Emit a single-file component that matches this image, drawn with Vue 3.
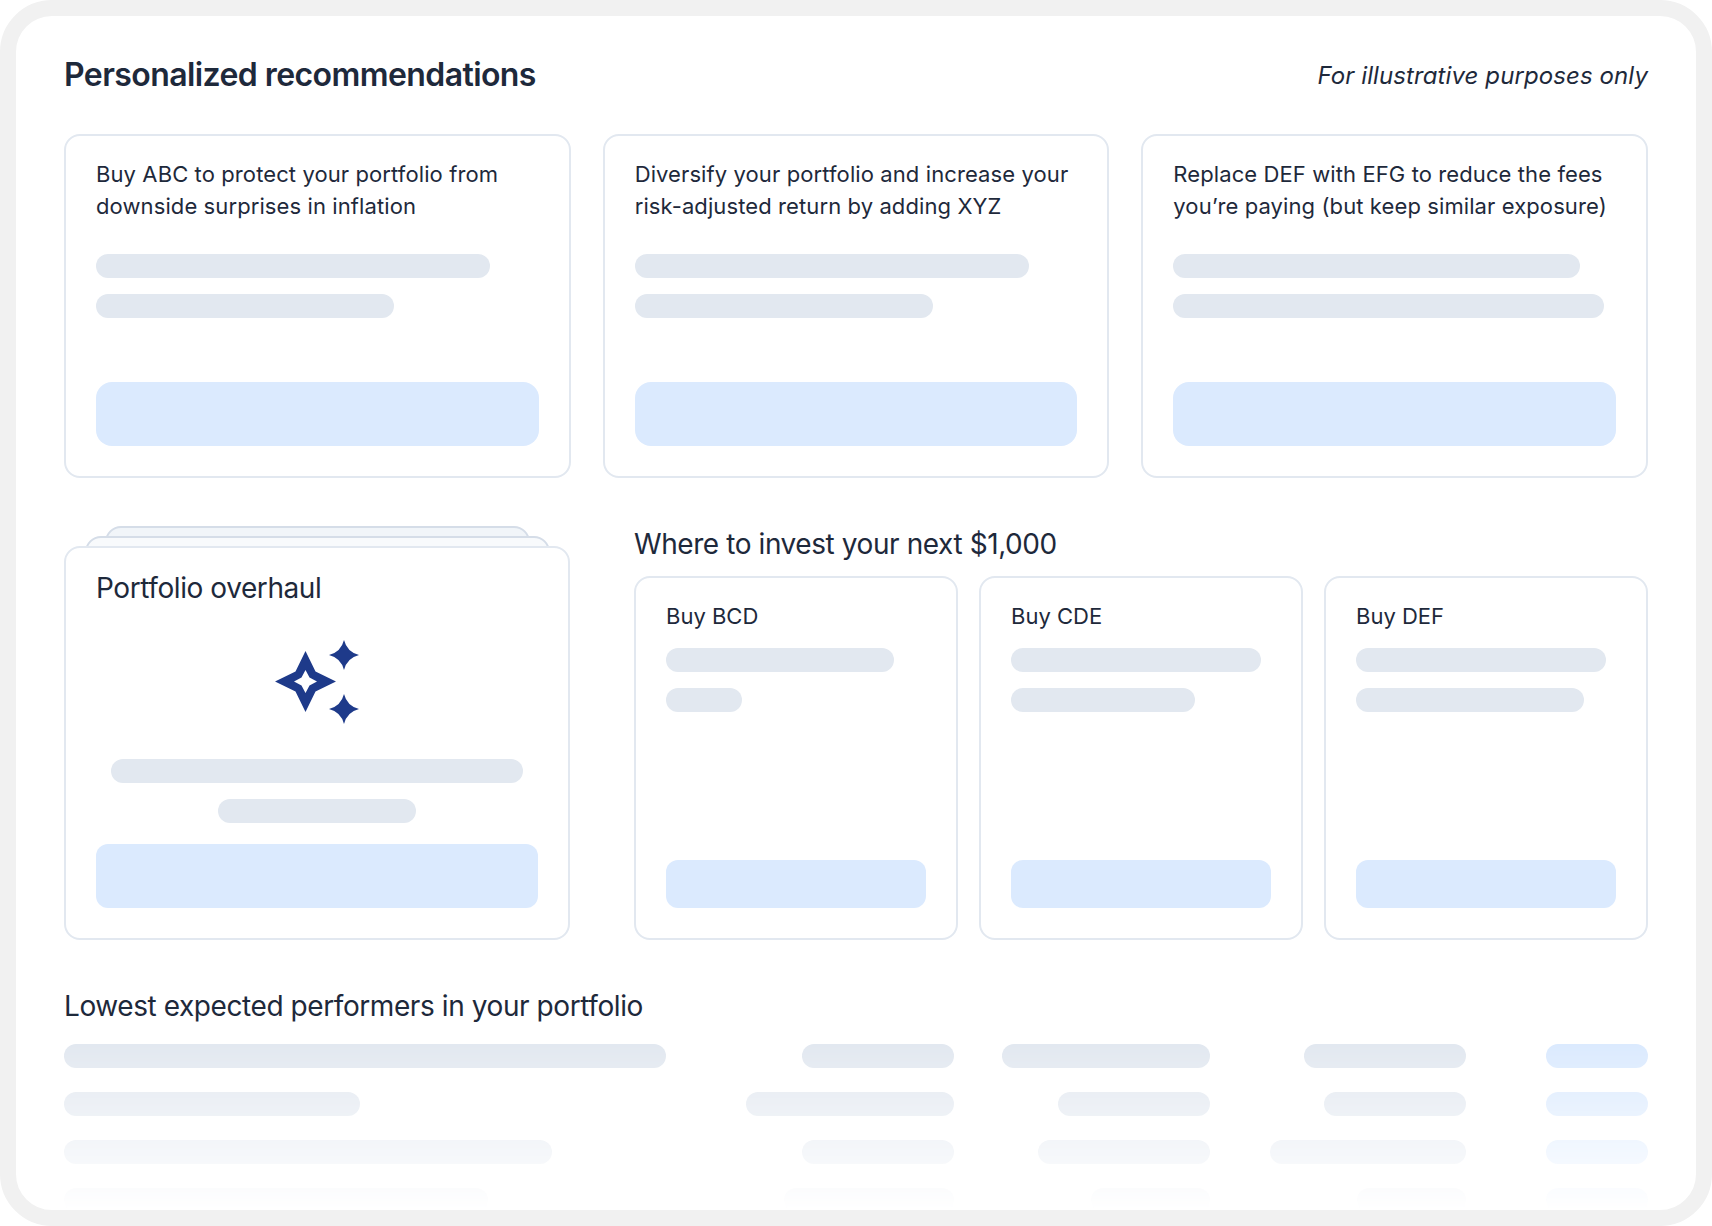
<template>
  <div class="frame">
    <div class="panel">
      <header class="top">
        <h1 class="title">Personalized recommendations</h1>
        <p class="note">For illustrative purposes only</p>
      </header>

      <section class="recs">
        <article v-for="r in recs" :key="r.text" class="card rec">
          <p class="rec-text">{{ r.line1 }}<br />{{ r.line2 }}</p>
          <div class="bars">
            <div v-for="w in r.bars" :key="w" class="bar" :style="{ width: w + 'px' }"></div>
          </div>
          <div class="btn rec-btn"></div>
        </article>
      </section>

      <section class="middle">
        <div class="stack">
          <div class="sheet sheet-back"></div>
          <div class="sheet sheet-mid"></div>
          <article class="card overhaul">
            <h2 class="heading">Portfolio overhaul</h2>
            <svg class="sparkles" width="84" height="84" viewBox="0 0 84 84" aria-hidden="true">
              <path
                fill-rule="evenodd"
                d="M30.5 11 40.5 31.5 61 41.5 40.5 51.5 30.5 72 20.5 51.5 0 41.5 20.5 31.5ZM30.5 30 26.5 37.5 19 41.5 26.5 45.5 30.5 53 34.5 45.5 42 41.5 34.5 37.5Z"
              />
              <path d="M69 0Q72 12 84 15 72 18 69 30 66 18 54 15 66 12 69 0Z" />
              <path d="M69 54Q72 66 84 69 72 72 69 84 66 72 54 69 66 66 69 54Z" />
            </svg>
            <div class="bars centered">
              <div class="bar" style="width: 412px"></div>
              <div class="bar" style="width: 198px"></div>
            </div>
            <div class="btn overhaul-btn"></div>
          </article>
        </div>

        <div class="invest">
          <h2 class="heading invest-heading">Where to invest your next $1,000</h2>
          <div class="buys">
            <article v-for="b in buys" :key="b.name" class="card buy">
              <p class="buy-name">{{ b.name }}</p>
              <div class="bars">
                <div v-for="w in b.bars" :key="w" class="bar" :style="{ width: w + 'px' }"></div>
              </div>
              <div class="btn buy-btn"></div>
            </article>
          </div>
        </div>
      </section>

      <section class="lowest">
        <h2 class="heading lowest-heading">Lowest expected performers in your portfolio</h2>
        <div class="table">
          <div v-for="(row, i) in rows" :key="i" class="row">
            <div class="bar" :style="{ width: row[0] + 'px' }"></div>
            <div class="bar end" :style="{ width: row[1] + 'px' }"></div>
            <div class="bar end" :style="{ width: row[2] + 'px' }"></div>
            <div class="bar end" :style="{ width: row[3] + 'px' }"></div>
            <div class="bar end action"></div>
          </div>
        </div>
      </section>
    </div>
  </div>
</template>

<script setup>
const recs = [
  {
    text: 'abc',
    line1: 'Buy ABC to protect your portfolio from',
    line2: 'downside surprises in inflation',
    bars: [394, 298],
  },
  {
    text: 'xyz',
    line1: 'Diversify your portfolio and increase your',
    line2: 'risk-adjusted return by adding XYZ',
    bars: [394, 298],
  },
  {
    text: 'efg',
    line1: 'Replace DEF with EFG to reduce the fees',
    line2: 'you’re paying (but keep similar exposure)',
    bars: [407, 431],
  },
];

const buys = [
  { name: 'Buy BCD', bars: [228, 76] },
  { name: 'Buy CDE', bars: [250, 184] },
  { name: 'Buy DEF', bars: [250, 228] },
];

const rows = [
  [602, 152, 208, 162],
  [296, 208, 152, 142],
  [488, 152, 172, 196],
  [424, 170, 119, 109],
];
</script>

<style>
html,
body {
  margin: 0;
  background: #fff;
}
</style>

<style scoped>
.frame {
  width: 1712px;
  height: 1226px;
  box-sizing: border-box;
  border: 16px solid #f1f1f1;
  border-radius: 52px;
  overflow: hidden;
  background: #fff;
  font-family: Inter, "Liberation Sans", sans-serif;
  color: #1e293b;
}
.panel {
  height: 100%;
  box-sizing: border-box;
  padding: 39px 48px 0;
  overflow: hidden;
}

.top {
  display: flex;
  justify-content: space-between;
  align-items: center;
  height: 40px;
  margin-bottom: 39px;
}
.title {
  margin: 0;
  font-size: 32px;
  line-height: 40px;
  font-weight: 600;
  letter-spacing: -0.58px;
}
.note {
  margin: 2px 0 0;
  font-size: 24px;
  line-height: 32px;
  font-style: italic;
  letter-spacing: 0.1px;
}

.card {
  box-sizing: border-box;
  border: 2px solid #e2e8f0;
  border-radius: 16px;
  background: #fff;
}
.bars {
  display: flex;
  flex-direction: column;
  gap: 16px;
}
.bar {
  height: 24px;
  border-radius: 12px;
  background: #e2e8f0;
}
.btn {
  background: #dbeafe;
}
.heading {
  margin: 0;
  font-size: 28px;
  line-height: 36px;
  font-weight: 400;
  letter-spacing: -0.42px;
}

.recs {
  display: grid;
  grid-template-columns: repeat(3, 1fr);
  gap: 32px;
}
.rec {
  height: 344px;
  padding: 22px 30px 30px;
}
.rec-text {
  margin: 0 0 32px;
  font-size: 22px;
  line-height: 32px;
  letter-spacing: 0.1px;
  white-space: nowrap;
}
.rec-btn {
  height: 64px;
  margin-top: 64px;
  border-radius: 16px;
}

.middle {
  display: grid;
  grid-template-columns: 506px 1fr;
  column-gap: 64px;
  margin-top: 48px;
  height: 414px;
}
.stack {
  position: relative;
  padding-top: 20px;
}
.sheet {
  position: absolute;
  box-sizing: border-box;
  height: 40px;
  border: 2px solid #d5dde8;
  border-radius: 16px 16px 0 0;
}
.sheet-back {
  top: 0;
  left: 41px;
  right: 40px;
  background: #f1f5f9;
}
.sheet-mid {
  top: 10px;
  left: 21px;
  right: 20px;
  background: #f8fafc;
}
.overhaul {
  position: relative;
  height: 394px;
  padding: 22px 30px 30px;
}
.sparkles {
  display: block;
  margin: 34px auto 0;
  fill: #1e3a8a;
}
.centered {
  align-items: center;
  margin-top: 35px;
}
.overhaul-btn {
  height: 64px;
  margin-top: 21px;
  border-radius: 12px;
}

.invest {
  display: flex;
  flex-direction: column;
}
.invest-heading {
  margin-bottom: 14px;
}
.buys {
  flex: 1;
  display: grid;
  grid-template-columns: repeat(3, 1fr);
  gap: 21px;
}
.buy {
  display: flex;
  flex-direction: column;
  padding: 22px 30px 30px;
}
.buy-name {
  margin: 0 0 16px;
  font-size: 22px;
  line-height: 32px;
}
.buy-btn {
  height: 48px;
  margin-top: auto;
  border-radius: 12px;
}

.lowest {
  margin-top: 48px;
}
.lowest-heading {
  margin-bottom: 20px;
}
.table {
  display: flex;
  flex-direction: column;
  gap: 24px;
  -webkit-mask-image: linear-gradient(to bottom, #000, transparent);
  mask-image: linear-gradient(to bottom, #000, transparent);
  height: 166px;
  overflow: hidden;
}
.row {
  display: grid;
  grid-template-columns: 634px 208px 208px 208px 134px;
  column-gap: 48px;
}
.end {
  justify-self: end;
}
.action {
  width: 102px;
  background: #dbeafe;
}
</style>
